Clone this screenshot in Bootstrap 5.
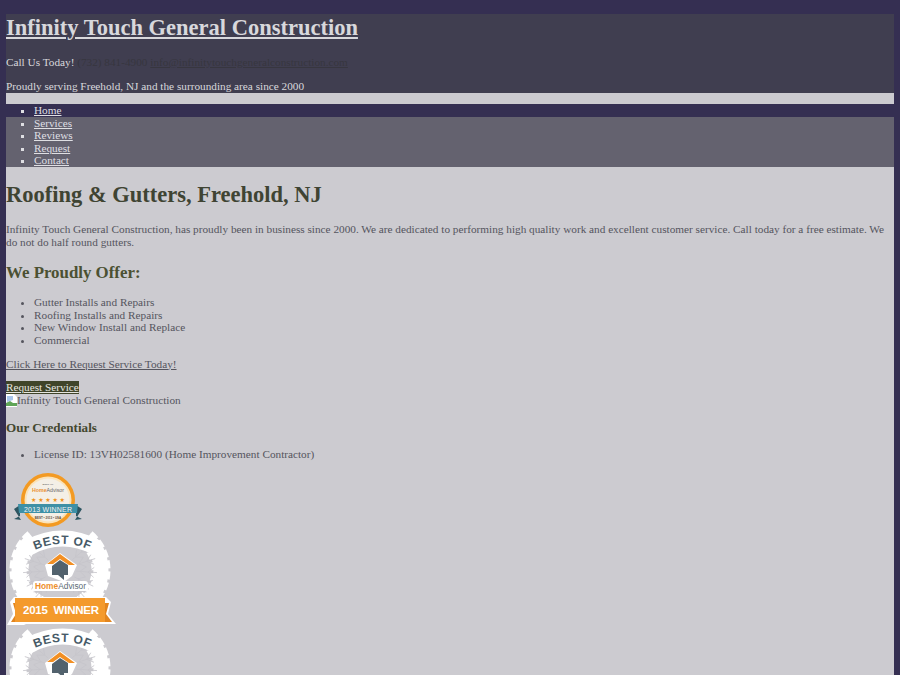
<!DOCTYPE html>
<html lang="en"><head><meta charset="utf-8"><title>Infinity Touch General Construction</title>
<link href="https://cdn.jsdelivr.net/npm/bootstrap@5.3.0/dist/css/bootstrap.min.css" rel="stylesheet">
<style>
html,body{height:100%}
body{background:#352f52;font:11.25px/12.6px "Liberation Serif",serif;color:#55555e;padding:14px 6px 0;overflow:hidden}
a{color:inherit}
a:hover{color:inherit}
.site-wrap{background:#cccbd0;height:661px;overflow:hidden}
.site-head{background:#403e50;color:#d8d8dc;height:79px}
.site-head h1{font:bold 22.5px/27px "Liberation Serif",serif;margin:0;height:42px}
.site-head p{margin:0;height:24px;line-height:12.6px}
.head-dim,.head-dim a{color:#37363f}
.site-gap{height:11px}
.site-nav{position:relative;height:63px;padding-left:28px;color:#dfdfe3;background:#64626f;margin:0;list-style:square}
.site-nav::before{content:"";position:absolute;left:0;right:-6px;top:0;height:13px;background:#352f52}
.site-nav li{position:relative;height:12.6px}
.page-body{padding-top:15px}
.page-body h2{font:bold 22.5px/26px "Liberation Serif",serif;color:#3f4433;margin:0 0 15px}
.page-body p{margin:0}
.page-body h3{font:bold 16.875px/19px "Liberation Serif",serif;color:#4b5132;margin:15px 0 14px}
.page-body ul{margin:0;padding-left:28px}
.page-body li{height:12.6px}
.page-body h4{font:bold 13.125px/15px "Liberation Serif",serif;color:#44482f;margin:13px 0 13px}
.req{background:#3f4429;color:#e6e6e0;display:inline-block;height:12.6px}
.alt-row{display:flex;align-items:center;height:13px}
.alt-row svg{flex:none}
.para-gap{margin-bottom:11px!important}
.badge-art{display:block}
.badge-one{margin-top:10px;margin-bottom:2px}
</style></head><body>
<svg width="0" height="0" class="position-absolute"><defs>
<g id="slit" fill="none" stroke="#c6c5cb" stroke-width=".8"><path d="M54 3 54 24M54 20 49 14M54 20 59 14M54 12 49 6M54 12 59 6"/></g>
<symbol id="best" viewBox="0 0 112 98">
<path d="M27.6 8.600A41 41 0 1 0 80.400 8.600" fill="none" stroke="#fff" stroke-width="15"/>
<path d="M22.500 2.500A49 49 0 1 0 85.500 2.500" fill="none" stroke="#fff" stroke-width="3" stroke-dasharray="8 3"/>
<path d="M32.800 14.700A33 33 0 1 0 75.200 14.700" fill="none" stroke="#fff" stroke-width="3" stroke-dasharray="8 3"/>
<use href="#slit" transform="rotate(50 54 40)"/><use href="#slit" transform="rotate(72 54 40)"/><use href="#slit" transform="rotate(94 54 40)"/><use href="#slit" transform="rotate(116 54 40)"/><use href="#slit" transform="rotate(138 54 40)"/>
<use href="#slit" transform="rotate(-50 54 40)"/><use href="#slit" transform="rotate(-72 54 40)"/><use href="#slit" transform="rotate(-94 54 40)"/><use href="#slit" transform="rotate(-116 54 40)"/><use href="#slit" transform="rotate(-138 54 40)"/>
<path d="M24 17A66 66 0 0 1 89 17" fill="none" stroke="#fff" stroke-width="16" stroke-linecap="round"/>
<path id="arcb" d="M24 22.500A66 66 0 0 1 89 22.500" fill="none"/>
<text font-family="Liberation Sans,sans-serif" font-weight="700" font-size="12" fill="#465a67" letter-spacing=".6"><textPath href="#arcb" startOffset="50%" text-anchor="middle">BEST OF</textPath></text>
<path d="M39 35 54 23 71 35 66 46 58 52 42 46z" fill="#fff"/>
<path d="M41 34 54 24 69 35H63L54 29 47 34z" fill="#f28f23"/>
<path d="M46 36 54 30 62 35V45H58L58 50 52 45H46z" fill="#52626d"/>
<rect x="27" y="51" width="55" height="10" rx="3" fill="#fff"/>
<text x="29" y="59" font-family="Liberation Sans,sans-serif" font-size="8.500" textLength="51" lengthAdjust="spacingAndGlyphs"><tspan font-weight="700" fill="#ee8f2c">Home</tspan><tspan fill="#5b6a75">Advisor</tspan></text>
<path d="M8 67H100L105 72 102 84 110 94H92L90 94H20L18 95H1L7 84 4 72z" fill="#fff"/>
<path d="M12 73H7L10 84 5 92H18V73zM97 73H103L100 84 106 92H91V73z" fill="#e2851f"/>
<rect x="9" y="68" width="90" height="24" fill="#f49a2c"/>
<text x="55" y="84" text-anchor="middle" font-family="Liberation Sans,sans-serif" font-weight="700" font-size="11.500" fill="#fff" xml:space="preserve" textLength="76">2015  WINNER</text>
</symbol>
</defs></svg>
<div class="site-wrap">
<header class="site-head">
<h1><a href="#">Infinity Touch General Construction</a></h1>
<p>Call Us Today! <span class="head-dim">(732) 841-4900 <a href="#">info@infinitytouchgeneralconstruction.com</a></span></p>
<p>Proudly serving Freehold, NJ and the surrounding area since 2000</p>
</header>
<div class="site-gap"></div>
<ul class="site-nav">
<li><a href="#">Home</a></li><li><a href="#">Services</a></li><li><a href="#">Reviews</a></li><li><a href="#">Request</a></li><li><a href="#">Contact</a></li>
</ul>
<main class="page-body">
<h2>Roofing &amp; Gutters, Freehold, NJ</h2>
<p class="para-gap">Infinity Touch General Construction, has proudly been in business since 2000. We are dedicated to performing high quality work and excellent customer service. Call today for a free estimate. We do not do half round gutters.</p>
<h3>We Proudly Offer:</h3>
<ul class="para-gap"><li>Gutter Installs and Repairs</li><li>Roofing Installs and Repairs</li><li>New Window Install and Replace</li><li>Commercial</li></ul>
<p class="para-gap"><a href="#">Click Here to Request Service Today!</a></p>
<a href="#" class="req">Request Service</a>
<div class="alt-row"><svg width="11" height="13" viewBox="0 0 11 13"><path d="M0 0h8l3 3v10H0z" fill="#fff"/><path d="M1 2h6v4l-6 2z" fill="#a9c6ec"/><path d="M0 12V9l4-2 3 2 4 0v3z" fill="#5fa557"/></svg><span>Infinity Touch General Construction</span></div>
<h4>Our Credentials</h4>
<ul><li>License ID: 13VH02581600 (Home Improvement Contractor)</li></ul>
<svg class="badge-art badge-one" width="88" height="58" viewBox="0 0 88 58">
<path d="M8 39 14 35V46L8 49 15 50ZM76 39 70 35V46L76 49 69 50Z" fill="#2d5561"/>
<circle cx="42" cy="30" r="27" fill="#f39a22"/>
<circle cx="42" cy="30" r="23.500" fill="#fbe3b8"/>
<circle cx="42" cy="30" r="21.500" fill="#f4efe6"/>
<text x="42" y="15" text-anchor="middle" font-family="Liberation Sans,sans-serif" font-size="2.500" fill="#777" font-weight="700">BEST OF</text>
<text x="42" y="22" text-anchor="middle" font-family="Liberation Sans,sans-serif" font-size="5.500" textLength="32" lengthAdjust="spacingAndGlyphs"><tspan font-weight="700" fill="#ea8f2f">Home</tspan><tspan fill="#666">Advisor</tspan></text>
<text x="42" y="32" text-anchor="middle" font-family="DejaVu Sans,sans-serif" font-size="6" fill="#ee9320" textLength="34">★★★★★</text>
<path d="M12 34H72L71 43H13Z" fill="#3e90a6"/>
<text x="42" y="41.500" text-anchor="middle" font-family="Liberation Sans,sans-serif" font-size="7" fill="#f4f4f4" textLength="48">2013 WINNER</text>
<text x="42" y="49" text-anchor="middle" font-family="Liberation Sans,sans-serif" font-size="3" font-weight="700" fill="#5a4a36">BEST • 2013 • USA</text>
</svg>
<svg class="badge-art" width="112" height="98"><use href="#best"/></svg>
<svg class="badge-art" width="112" height="98"><use href="#best"/></svg>
</main>
</div>
</body></html>
